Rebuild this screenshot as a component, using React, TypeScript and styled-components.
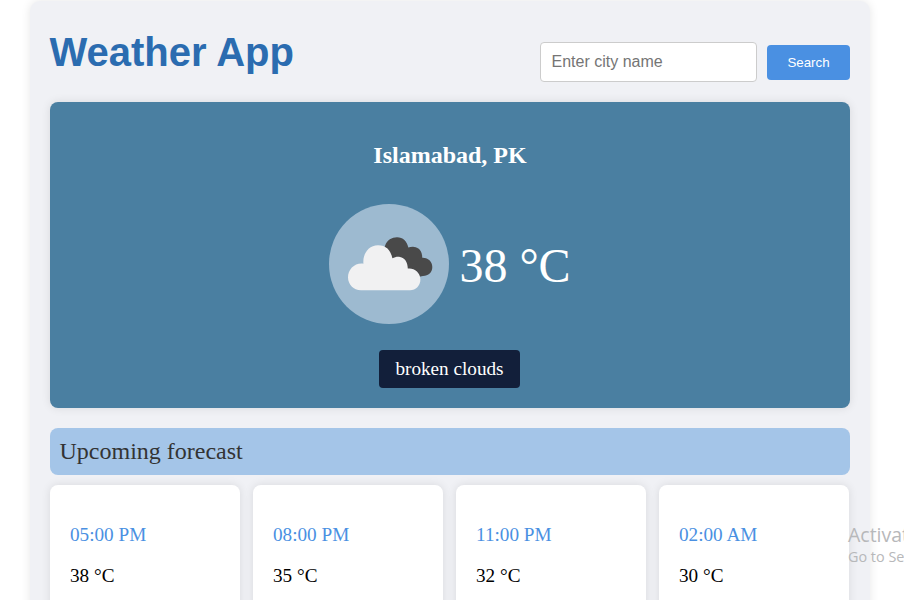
import React from "react";
import styled, { createGlobalStyle } from "styled-components";

const GlobalStyle = createGlobalStyle`
  *, *::before, *::after { box-sizing: border-box; }
  html, body { margin: 0; height: 100%; overflow: hidden; background: #fff; }
  body { font-family: "Liberation Serif", "Times New Roman", serif; color: #000; }
  p, h1, h2 { margin: 0; }
`;

const Viewport = styled.div`
  position: relative;
  width: 904px;
  height: 600px;
  overflow: hidden;
`;

const Container = styled.main`
  width: 840px;
  height: 760px;
  margin: 1px 0 0 30px;
  padding: 20px;
  border-radius: 10px;
  background: #f0f1f5;
  box-shadow: 0 0 10px rgba(0, 0, 0, 0.1);
`;

const Header = styled.header`
  display: flex;
  justify-content: space-between;
  height: 81px;
`;

const Title = styled.h1`
  padding-top: 8px;
  margin-left: -0.5px;
  font: bold 40px/46px "Liberation Sans", Arial, sans-serif;
  color: #2b6cb0;
`;

const SearchForm = styled.form`
  display: flex;
  align-items: flex-start;
  gap: 10px;
  padding-top: 21px;
`;

const CityInput = styled.input`
  width: 217px;
  height: 40px;
  padding: 0 10px 0 10.5px;
  border: 1px solid #ccc;
  border-radius: 4px;
  background: #fff;
  font: 16px "Liberation Sans", Arial, sans-serif;
  &::placeholder { color: #757575; }
`;

const SearchButton = styled.button`
  width: 83px;
  height: 35px;
  margin-top: 3px;
  padding: 0;
  border: none;
  border-radius: 4px;
  background: #4a90e2;
  color: #fff;
  font: 13.333px "Liberation Sans", Arial, sans-serif;
`;

const CurrentWeather = styled.section`
  display: flex;
  flex-direction: column;
  align-items: center;
  height: 306px;
  padding-top: 40px;
  border-radius: 8px;
  background: #4a7fa1;
  box-shadow: 0 0 10px rgba(0, 0, 0, 0.1);
  color: #fff;
`;

const City = styled.h2`
  font-size: 24px;
  line-height: 27px;
`;

const Reading = styled.div`
  display: flex;
  align-items: center;
  gap: 10px;
  margin-top: 35px;
`;

const IconDisc = styled.div`
  width: 120px;
  height: 120px;
  border-radius: 50%;
  background: #9dbad0;
  svg { display: block; }
`;

const Temperature = styled.p`
  padding-top: 2px;
  font-size: 48px;
  line-height: 55px;
`;

const Condition = styled.p`
  width: 141px;
  margin: 26px 1px 0 0;
  padding: 8px 0;
  border-radius: 4px;
  background: #121f3a;
  font-size: 19.2px;
  line-height: 22px;
  text-align: center;
`;

const ForecastHeading = styled.h2`
  height: 47px;
  margin: 20px 0 10px;
  padding: 10px 9.5px;
  border-radius: 8px;
  background: #a4c5e8;
  color: #333;
  font-size: 24px;
  font-weight: normal;
  line-height: 27px;
`;

const ForecastList = styled.div`
  display: grid;
  grid-template-columns: repeat(4, 190px);
  column-gap: 13px;
`;

const ForecastCard = styled.article`
  height: 220px;
  padding: 39px 20px 20px;
  border-radius: 8px;
  background: #fff;
  box-shadow: 0 0 10px rgba(0, 0, 0, 0.1);
  font-size: 19.2px;
  line-height: 22px;
`;

const Time = styled.p`
  margin-bottom: 19px;
  color: #4a90e2;
`;

const Watermark = styled.div`
  position: absolute;
  left: 848px;
  top: 521px;
  white-space: nowrap;
  color: #b7b8ba;
  font-family: "Open Sans", "Noto Sans", sans-serif;
`;

const WatermarkTitle = styled.p`
  font-size: 19.5px;
  line-height: 27px;
`;

const WatermarkText = styled.p`
  font-size: 14.4px;
  line-height: 18px;
`;

const forecast = [
  { time: "05:00 PM", temp: 38 },
  { time: "08:00 PM", temp: 35 },
  { time: "11:00 PM", temp: 32 },
  { time: "02:00 AM", temp: 30 },
];

function BrokenClouds() {
  return (
    <svg width="120" height="120" viewBox="0 0 120 120" aria-hidden="true">
      <defs>
        <filter id="edge" x="-10%" y="-10%" width="120%" height="120%">
          <feGaussianBlur stdDeviation="0.65" />
        </filter>
      </defs>
      <g filter="url(#edge)">
        <path
          fill="#48484a"
          d="M56 42C58 36 63 33.3 68 33.3C74 33.3 78 37 79.3 43.6C81 43 83 42.7 85 42.9C90 43.3 93.2 47 93.3 53.7C99.5 53.5 103.3 58 103.3 63C103.3 68.5 99.5 72 94 72L84 74L60 60L54 48Z"
        />
        <path
          fill="#f1f1f2"
          d="M32 86.3C24.5 86.3 19 80.5 19 73.3C19 66 24.8 59.6 32.6 59.6C33.2 59.6 33.8 59.6 34.4 59.7C33.5 49.5 40 41.2 49 41.2C57 41.2 61.8 46 63.4 54.3C65.7 53 68.5 52.4 71 52.9C75.6 53.7 78.7 57.8 78.8 64.6C84.7 63.6 91.4 68.2 91.4 75.5C91.4 81.5 86.8 86.3 81 86.3Z"
        />
      </g>
    </svg>
  );
}

export default function App() {
  return (
    <Viewport>
      <GlobalStyle />
      <Container>
        <Header>
          <Title>Weather App</Title>
          <SearchForm onSubmit={(event) => event.preventDefault()}>
            <CityInput placeholder="Enter city name" />
            <SearchButton type="submit">Search</SearchButton>
          </SearchForm>
        </Header>
        <CurrentWeather>
          <City>Islamabad, PK</City>
          <Reading>
            <IconDisc>
              <BrokenClouds />
            </IconDisc>
            <Temperature>38 °C</Temperature>
          </Reading>
          <Condition>broken clouds</Condition>
        </CurrentWeather>
        <ForecastHeading>Upcoming forecast</ForecastHeading>
        <ForecastList>
          {forecast.map(({ time, temp }) => (
            <ForecastCard key={time}>
              <Time>{time}</Time>
              <p>{temp} °C</p>
            </ForecastCard>
          ))}
        </ForecastList>
      </Container>
      <Watermark>
        <WatermarkTitle>Activat</WatermarkTitle>
        <WatermarkText>Go to Se</WatermarkText>
      </Watermark>
    </Viewport>
  );
}
